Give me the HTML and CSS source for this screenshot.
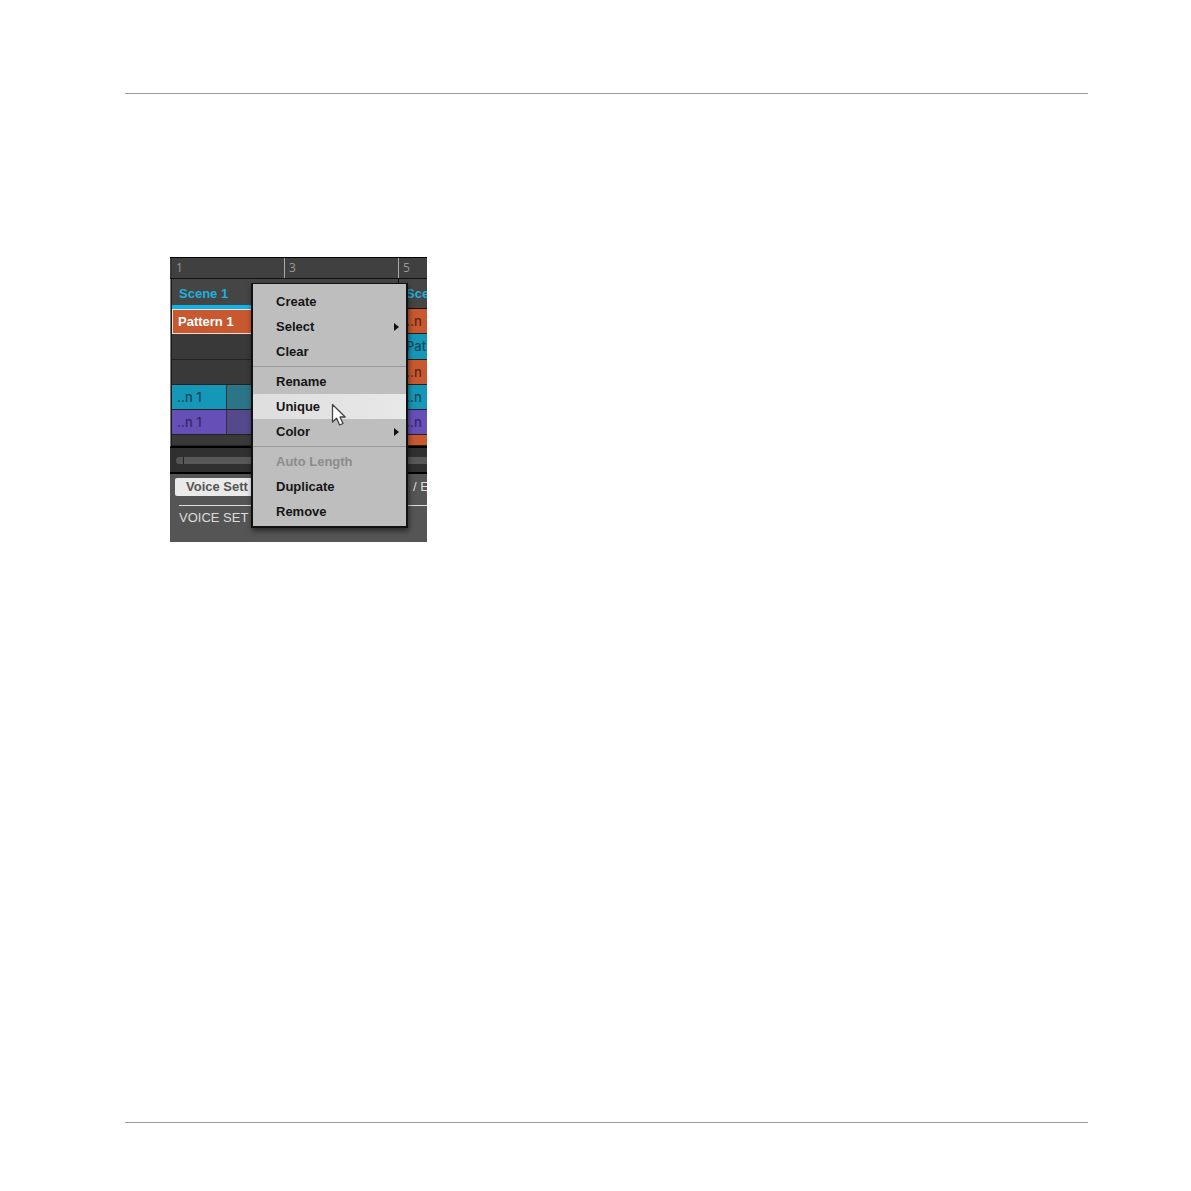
FILE: index.html
```html
<!DOCTYPE html>
<html lang="en">
<head>
  <meta charset="UTF-8">
  <meta name="viewport" content="width=device-width, initial-scale=1.0">
  <title>Unique</title>
  <link rel="stylesheet" href="styles.css">
</head>
<body>

  <hr class="rule">

  <main class="content">
    <div class="app">
      <div class="ruler">
        <span class="tick first">1</span>
        <span class="tick">3</span>
        <span class="tick">5</span>
      </div>

      <div class="arranger">
        <div class="scene active">
          <div class="scene-name">Scene 1</div>
          <div class="row pattern selected">Pattern 1</div>
          <div class="row tall"></div>
          <div class="row"></div>
          <div class="row split teal"><span class="clip">..n 1</span></div>
          <div class="row split purple"><span class="clip">..n 1</span></div>
          <div class="row short"></div>
        </div>
        <div class="scene">
          <div class="scene-name">Sce</div>
          <div class="row pattern">..n</div>
          <div class="row tall teal">Pat</div>
          <div class="row pattern">..n</div>
          <div class="row teal">..n</div>
          <div class="row purple">..n</div>
          <div class="row short pattern"></div>
        </div>
      </div>

      <div class="scroll"><div class="track"></div></div>

      <div class="panel">
        <div class="tabs">
          <button class="tab">Voice Sett</button>
          <span class="tab-next">/ E</span>
        </div>
        <div class="heading">VOICE SET</div>
      </div>

      <div class="menu">
        <button class="item">Create</button>
        <button class="item sub">Select</button>
        <button class="item">Clear</button>
        <hr class="sep">
        <button class="item">Rename</button>
        <button class="item hover">Unique</button>
        <button class="item sub">Color</button>
        <hr class="sep">
        <button class="item" disabled>Auto Length</button>
        <button class="item">Duplicate</button>
        <button class="item">Remove</button>
      </div>

      <svg class="cursor" width="16" height="24" viewBox="0 0 16 24">
        <path d="M1.5 1.5V19L5.6 15.2L8.6 22L12 20.5L9 14H14.2Z" fill="#fff" stroke="#444" stroke-width="1.3" stroke-linejoin="round"/>
      </svg>
    </div>
  </main>

  <hr class="rule">

</body>
</html>
```
FILE: styles.css
```css
* { box-sizing: border-box; }
body {
  margin: 0;
  min-height: 100vh;
  padding: 93px 103px 68px 125px;
  display: flex;
  flex-direction: column;
  background: #fff;
  font-family: "Liberation Sans", Arial, sans-serif;
}
.rule { width: 100%; height: 1px; margin: 0; border: none; background: #999; }
.content { flex: 1; padding: 163px 45px 0; }

.app {
  position: relative;
  width: 257px;
  overflow: hidden;
  border-top: 1px solid #000;
  background: #555;
  font-size: 13px;
  white-space: nowrap;
}

/* timeline */
.ruler {
  display: flex;
  height: 21px;
  padding-left: 1px;
  background: #404040;
  border-bottom: 1px solid #111;
}
.tick {
  flex: 0 0 114px;
  padding-left: 4px;
  border-left: 1px solid #aaa;
  color: #999;
  font-family: "Open Sans", sans-serif;
  font-size: 12px;
  line-height: 20px;
}
.first { flex-basis: 113px; border-left-color: #333; }
.arranger {
  display: flex;
  padding-left: 1px;
  background: #1c1c1c;
  border-left: 1px solid #777;
  border-bottom: 1px solid #000;
}
.scene { flex: 0 0 227px; border-right: 1px solid #111; }
.scene-name {
  height: 30px;
  padding-left: 7px;
  background: #454545;
  border-bottom: 1px solid #111;
  color: #1fb0dc;
  font-weight: bold;
  line-height: 29px;
}
.active .scene-name { border-bottom: 4px solid #0cb5ec; }
.row {
  height: 25px;
  padding-left: 5px;
  background: #393939;
  border-bottom: 1px solid #222;
  color: #15465a;
  font-family: Inter, "Liberation Sans", sans-serif;
  font-weight: 500;
  line-height: 25px;
}
.tall { height: 26px; }
.short { height: 11px; }
.pattern { background: #c8582f; color: #5c2917; }
.selected {
  border: 1px solid #f5ddd0;
  color: #fff;
  font-family: "Liberation Sans", Arial, sans-serif;
  font-weight: bold;
  line-height: 24px;
}
.teal { background: #1598b8; }
.purple { background: #6650b8; color: #352768; }
.split { padding: 0; }
.clip { display: block; width: 55px; height: 24px; padding-left: 5px; border-right: 1px solid #333; }
.split.teal { background: #2c7488; }
.split.teal .clip { background: #1598b8; }
.split.purple { background: #54498a; }
.split.purple .clip { background: #6650b8; }

.scene + .scene .scene-name,
.scene + .scene .row { padding-left: 7px; }

.scroll {
  height: 27px;
  padding: 9px 0 0 6px;
  background: #303030;
  border-top: 1px solid #000;
  border-bottom: 2px solid #000;
}
.track { height: 7px; border-radius: 4px 0 0 4px; background: linear-gradient(90deg, #555 7px, #222 7px 8px, #585858 8px); }

.panel { padding: 4px 0 10px 5px; background: #555; color: #ddd; }
.tabs { display: flex; height: 18px; }
.tab {
  flex: 0 0 200px;
  padding: 0 0 0 11px;
  border: none;
  border-radius: 2px;
  background: #eaeaea;
  color: #555;
  font: bold 13px/18px "Liberation Sans", Arial, sans-serif;
  text-align: left;
}
.tab-next { padding-left: 38px; line-height: 18px; }
.heading { margin: 9px 0 0 4px; padding-bottom: 2px; border-top: 1px solid #ddd; line-height: 24px; }

/* context menu */
.menu {
  position: absolute;
  top: 25px;
  left: 81px;
  width: 157px;
  padding: 5px 0 2px;
  border: 1px solid #111;
  border-width: 1px 2px 2px;
  background: #bebebe;
  box-shadow: 1px 3px 5px rgba(0, 0, 0, 0.5);
}
.item {
  display: flex;
  align-items: center;
  justify-content: space-between;
  width: 100%;
  height: 25px;
  padding: 0 7px 0 23px;
  border: none;
  background: none;
  color: #151515;
  font: bold 13px "Liberation Sans", Arial, sans-serif;
}
.item:disabled { color: #8c8c8c; }
.hover { background: linear-gradient(90deg, #dedede, #e8e8e8); }
.sub::after {
  content: "";
  border: 4px solid transparent;
  border-left: 5px solid #111;
  border-right: none;
}
.sep { height: 1px; margin: 2px 0; border: none; background: #999; }
.cursor { position: absolute; top: 145px; left: 161px; }
```
